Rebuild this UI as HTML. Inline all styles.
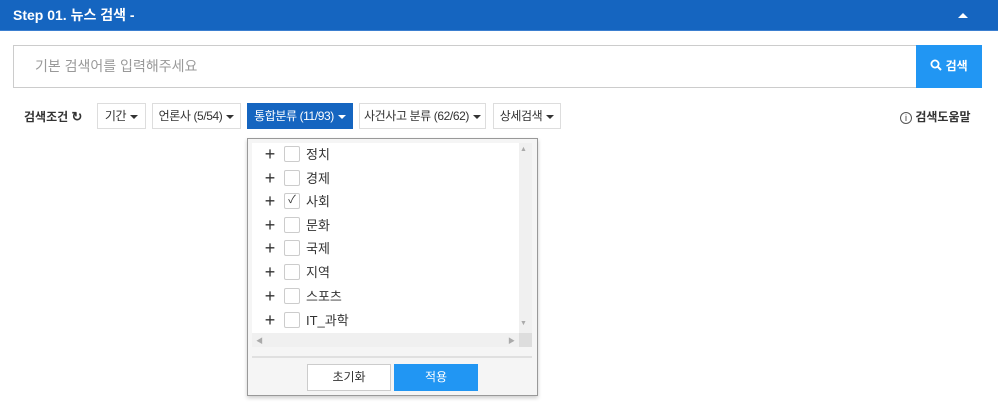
<!DOCTYPE html><html><head><meta charset="utf-8"><style>
*{box-sizing:border-box;margin:0;padding:0}
body{width:998px;height:404px;background:#fff;font-family:"Liberation Sans","Noto Sans CJK KR",sans-serif;position:relative;overflow:hidden;color:#333}
.a{position:absolute}
.hd{left:0;top:0;width:998px;height:31px;background:#1565c0;color:#fff;font-weight:bold;font-size:14px;line-height:31px;padding-left:13px;border-bottom:1px solid #3b7fd0}
.btn{position:absolute;top:103px;height:26px;border:1px solid #ddd;background:#fff;font-size:12px;line-height:24px;text-align:center;color:#333;letter-spacing:-0.4px;white-space:nowrap}
.car{display:inline-block;border-left:4px solid transparent;border-right:4px solid transparent;border-top:4px solid #333;vertical-align:middle;margin-left:4px}
.row{position:absolute;left:263px;height:20px;font-size:13px;line-height:20px;color:#333}
.row .p{position:absolute;left:0;top:-1px;font-size:18px;width:14px;text-align:center;color:#333}
.row .c{position:absolute;left:21px;top:1px;width:16px;height:16px;border:1px solid #ccc;border-radius:2px;background:#fff}
.row .t{position:absolute;left:43px;top:0;white-space:nowrap}
</style></head><body>
<div class="a hd">Step 01. 뉴스 검색 -</div>
<div class="a" style="left:958px;top:13px;border-left:5px solid transparent;border-right:5px solid transparent;border-bottom:5px solid #fff"></div>
<div class="a" style="left:13px;top:45px;width:904px;height:43px;border:1px solid #ccc;font-size:14px;color:#999;line-height:41px;padding-left:21px">기본 검색어를 입력해주세요</div>
<div class="a" style="left:916px;top:45px;width:66px;height:43px;background:#2196f3;color:#fff;font-size:12px;font-weight:bold;line-height:43px;text-align:center">
<svg width="12" height="12" viewBox="0 0 12 12" style="vertical-align:-1px"><circle cx="5" cy="5" r="3.6" fill="none" stroke="#fff" stroke-width="1.8"/><path d="M7.6 7.6L11 11" stroke="#fff" stroke-width="2"/></svg> 검색</div>
<div class="a" style="left:24px;top:108px;font-size:12px;font-weight:bold;color:#333">검색조건 <span style="font-size:13px">&#x21bb;</span></div>
<div class="btn" style="left:97px;width:49px">기간<span class="car"></span></div>
<div class="btn" style="left:152px;width:89px">언론사 (5/54)<span class="car"></span></div>
<div class="btn" style="left:247px;width:106px;background:#1565c0;border-color:#1565c0;color:#fff">통합분류 (11/93)<span class="car" style="border-top-color:#fff"></span></div>
<div class="btn" style="left:359px;width:127px">사건사고 분류 (62/62)<span class="car"></span></div>
<div class="btn" style="left:493px;width:68px">상세검색<span class="car"></span></div>
<div class="a" style="left:900px;top:108px;font-size:12px;font-weight:bold;color:#333"><span style="font-weight:normal;display:inline-block;width:12px;height:12px;border:1px solid #555;border-radius:50%;font-size:9px;line-height:10px;text-align:center">i</span> 검색도움말</div>
<div class="a" style="left:247px;top:138px;width:291px;height:258px;border:1px solid #999;background:#f5f5f5;box-shadow:0 2px 4px rgba(0,0,0,.2)"></div>
<div class="a" style="left:252px;top:143px;width:280px;height:204px;background:#f0f0f0"></div>
<div class="a" style="left:252px;top:143px;width:267px;height:190px;background:#fff"></div>
<div class="a" style="left:520px;top:146px;font-size:7px;color:#aaa">▲</div>
<div class="a" style="left:520px;top:320px;font-size:7px;color:#aaa">▼</div>
<div class="a" style="left:256px;top:336px;font-size:7px;color:#aaa">◀</div>
<div class="a" style="left:508px;top:336px;font-size:7px;color:#aaa">▶</div>
<div class="a" style="left:519px;top:333px;width:13px;height:14px;background:#ddd"></div>
<div class="a" style="left:252px;top:356px;width:280px;height:2px;background:#e0e0e0"></div>
<div class="a" style="left:307px;top:364px;width:84px;height:27px;border:1px solid #ccc;background:#fff;font-size:12px;line-height:25px;text-align:center">초기화</div>
<div class="a" style="left:394px;top:364px;width:84px;height:27px;background:#2196f3;color:#fff;font-size:12px;line-height:27px;text-align:center">적용</div>
<div class="row" style="top:145px"><span class="p">+</span><span class="c"></span><span class="t">정치</span></div>
<div class="row" style="top:169px"><span class="p">+</span><span class="c"></span><span class="t">경제</span></div>
<div class="row" style="top:192px"><span class="p">+</span><span class="c" style="font-size:11px;line-height:13px;text-align:center">✓</span><span class="t">사회</span></div>
<div class="row" style="top:216px"><span class="p">+</span><span class="c"></span><span class="t">문화</span></div>
<div class="row" style="top:239px"><span class="p">+</span><span class="c"></span><span class="t">국제</span></div>
<div class="row" style="top:263px"><span class="p">+</span><span class="c"></span><span class="t">지역</span></div>
<div class="row" style="top:287px"><span class="p">+</span><span class="c"></span><span class="t">스포츠</span></div>
<div class="row" style="top:311px"><span class="p">+</span><span class="c"></span><span class="t">IT_과학</span></div>
</body></html>
